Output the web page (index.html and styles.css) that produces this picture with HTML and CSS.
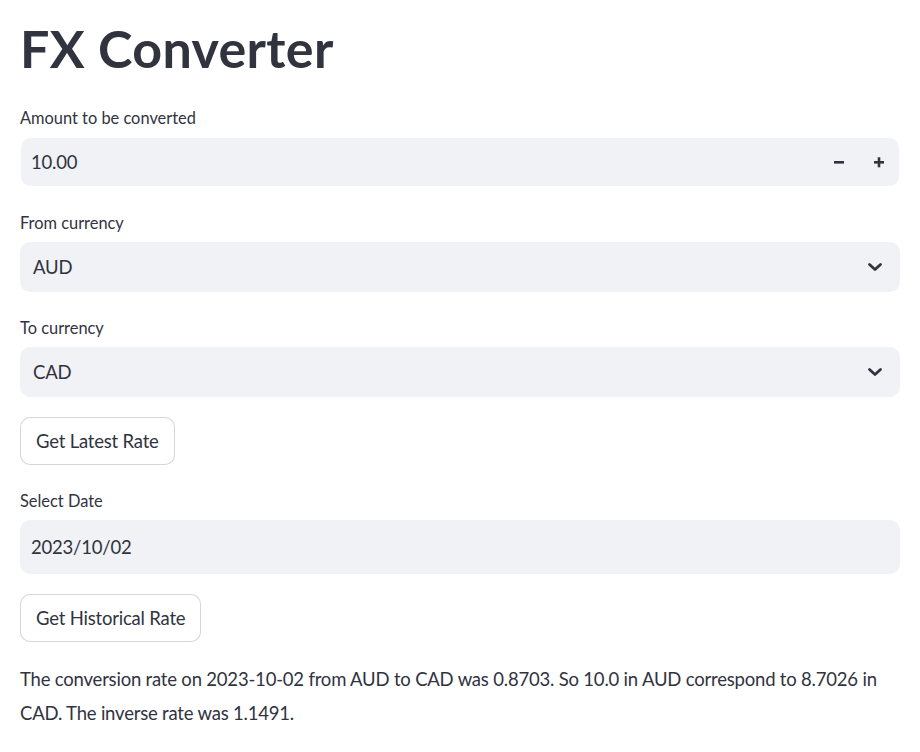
FILE: index.html
```html
<!DOCTYPE html>
<html lang="en">
<head>
<meta charset="utf-8">
<title>FX Converter</title>
<link rel="stylesheet" href="styles.css">
</head>
<body>
<main class="app">
  <h1 class="title">FX Converter</h1>

  <div class="widget">
    <label class="label">Amount to be converted</label>
    <div class="field field-number">
      <span class="value">10.00</span>
      <div class="steppers">
        <span class="step">
          <svg width="12" height="12" viewBox="0 0 12 12"><rect x="1" y="5" width="10" height="2.6" fill="#31333F"/></svg>
        </span>
        <span class="step">
          <svg width="12" height="12" viewBox="0 0 12 12"><rect x="1" y="5" width="10" height="2.6" fill="#31333F"/><rect x="4.7" y="1.3" width="2.6" height="10" fill="#31333F"/></svg>
        </span>
      </div>
    </div>
  </div>

  <div class="widget">
    <label class="label">From currency</label>
    <div class="field field-select">
      <span class="value value-select">AUD</span>
      <svg class="chevron" width="16" height="10" viewBox="0 0 16 10"><path d="M2.5 2.5 L8 7.5 L13.5 2.5" fill="none" stroke="#31333F" stroke-width="2.8" stroke-linecap="round" stroke-linejoin="round"/></svg>
    </div>
  </div>

  <div class="widget">
    <label class="label">To currency</label>
    <div class="field field-select">
      <span class="value value-select">CAD</span>
      <svg class="chevron" width="16" height="10" viewBox="0 0 16 10"><path d="M2.5 2.5 L8 7.5 L13.5 2.5" fill="none" stroke="#31333F" stroke-width="2.8" stroke-linecap="round" stroke-linejoin="round"/></svg>
    </div>
  </div>

  <div class="widget">
    <button class="btn" type="button">Get Latest Rate</button>
  </div>

  <div class="widget">
    <label class="label">Select Date</label>
    <div class="field field-date">
      <span class="value">2023/10/02</span>
    </div>
  </div>

  <div class="widget">
    <button class="btn" type="button">Get Historical Rate</button>
  </div>

  <p class="result">The conversion rate on 2023-10-02 from AUD to CAD was 0.8703. So 10.0 in AUD correspond to 8.7026 in CAD. The inverse rate was 1.1491.</p>
</main>
</body>
</html>
```

FILE: styles.css
```css
* { box-sizing: border-box; }

html, body {
  margin: 0;
  padding: 0;
  background: #ffffff;
}

body {
  font-family: "Source Sans Pro", Lato, "Noto Sans", sans-serif;
  color: #31333F;
}

.app {
  width: 880px;
  margin: 0 20px;
  display: flex;
  flex-direction: column;
  gap: 20px;
}

.title {
  margin: 0;
  padding-top: 17px;
  height: 82px;
  font-size: 52px;
  line-height: 62px;
  font-weight: 700;
  letter-spacing: 0.35px;
  color: #31333F;
}

.widget {
  display: flex;
  flex-direction: column;
  align-items: flex-start;
}

.label {
  display: flex;
  align-items: center;
  height: 30px;
  margin-bottom: 5px;
  font-size: 16.4px;
  color: #31333F;
}

.field {
  width: 100%;
  background: #F0F2F6;
  border-radius: 10px;
  display: flex;
  align-items: center;
  font-size: 18.5px;
  letter-spacing: -0.2px;
  color: #31333F;
}

.field-number {
  height: 50px;
  border: 1px solid #ffffff;
  border-radius: 11px;
  padding-left: 10px;
}

.field-select {
  height: 50px;
  padding-left: 13px;
  padding-right: 17px;
  justify-content: space-between;
}

.field-date {
  height: 54px;
  padding-left: 11px;
}

.value { flex: 1; }
.value-select { flex: none; }

.steppers {
  display: flex;
  align-items: center;
  height: 100%;
}

.step {
  width: 40px;
  height: 100%;
  display: flex;
  align-items: center;
  justify-content: center;
}

.chevron { display: block; }

.btn {
  height: 48px;
  padding: 0 15px;
  background: #ffffff;
  border: 1px solid rgba(49, 51, 63, 0.2);
  border-radius: 10px;
  font-family: inherit;
  font-size: 18.5px;
  letter-spacing: -0.2px;
  color: #31333F;
}

.result {
  margin: 0;
  font-size: 18.5px;
  letter-spacing: -0.2px;
  line-height: 34px;
  color: #31333F;
}
```
